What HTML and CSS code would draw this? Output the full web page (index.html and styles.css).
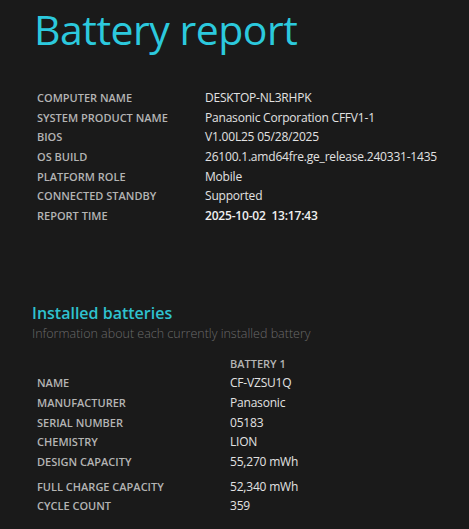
FILE: index.html
```html
<!DOCTYPE html>
<html>
<head>
<meta charset="utf-8">
<link rel="stylesheet" href="styles.css">
</head>
<body>
<div class="page">
  <h1 class="title">Battery report</h1>
  <table class="info">
    <tr><td class="label">COMPUTER NAME</td><td class="value">DESKTOP-NL3RHPK</td></tr>
    <tr><td class="label">SYSTEM PRODUCT NAME</td><td class="value">Panasonic Corporation CFFV1-1</td></tr>
    <tr><td class="label">BIOS</td><td class="value">V1.00L25 05/28/2025</td></tr>
    <tr><td class="label">OS BUILD</td><td class="value">26100.1.amd64fre.ge_release.240331-1435</td></tr>
    <tr><td class="label">PLATFORM ROLE</td><td class="value">Mobile</td></tr>
    <tr><td class="label">CONNECTED STANDBY</td><td class="value">Supported</td></tr>
    <tr><td class="label">REPORT TIME</td><td class="value strong">2025-10-02&nbsp;&nbsp;13:17:43</td></tr>
  </table>

  <h2 class="section">Installed batteries</h2>
  <div class="subtitle">Information about each currently installed battery</div>

  <table class="batt">
    <tr class="head"><td class="label"></td><td class="colhead">BATTERY 1</td></tr>
    <tr><td class="label">NAME</td><td class="value">CF-VZSU1Q</td></tr>
    <tr><td class="label">MANUFACTURER</td><td class="value">Panasonic</td></tr>
    <tr><td class="label">SERIAL NUMBER</td><td class="value">05183</td></tr>
    <tr><td class="label">CHEMISTRY</td><td class="value">LION</td></tr>
    <tr><td class="label">DESIGN CAPACITY</td><td class="value">55,270 mWh</td></tr>
    <tr class="gap"><td class="label">FULL CHARGE CAPACITY</td><td class="value">52,340 mWh</td></tr>
    <tr><td class="label">CYCLE COUNT</td><td class="value">359</td></tr>
  </table>
</div>
</body>
</html>
```
FILE: styles.css
```css
html, body {
  margin: 0;
  padding: 0;
  background: #1a1a1a;
}
.page {
  font-family: "Open Sans", "Noto Sans", sans-serif;
  padding: 0 0 0 34px;
  height: 529px;
  overflow: hidden;
}
.title {
  margin: 0;
  padding-top: 1px;
  font-weight: 400;
  font-size: 41px;
  line-height: 56px;
  color: #2cc9dd;
  letter-spacing: -0.5px;
}
table {
  border-collapse: collapse;
}
td {
  padding: 0;
  white-space: nowrap;
}
.info {
  margin-top: 31px;
  margin-left: 3px;
}
.info tr {
  height: 19.6px;
}
.info .label {
  width: 168px;
}
.label {
  font-size: 11px;
  font-weight: 600;
  color: #b4b4b4;
}
.value {
  font-size: 12px;
  color: #e2e2e2;
  letter-spacing: -0.2px;
}
.value.strong {
  font-weight: 600;
  color: #f0f0f0;
}
.section {
  margin: 77px 0 0 -2px;
  font-size: 16px;
  font-weight: 600;
  line-height: 22px;
  color: #2fc2cf;
}
.subtitle {
  margin-left: -2px;
  margin-top: 1px;
  font-size: 12.5px;
  font-weight: 300;
  color: #6a6a6a;
  line-height: 18px;
}
.batt {
  margin-top: 10px;
  margin-left: 3px;
}
.batt .label {
  width: 193px;
}
.batt tr {
  height: 19.7px;
}
.batt tr.gap td {
  height: 19.7px;
  padding-top: 5px;
}
.colhead {
  font-size: 11px;
  font-weight: 600;
  color: #b4b4b4;
}
```
